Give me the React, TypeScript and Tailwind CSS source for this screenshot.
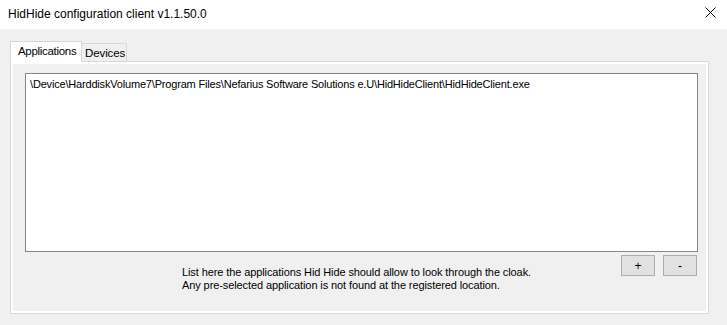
import React from 'react';

const font = "font-['Liberation_Sans',Arial,sans-serif] text-[11px] tracking-[-0.1px] text-black";

const TabStrip: React.FC = () => (
  <div className="flex items-end h-[21px]">
    <div className="relative z-10 h-[21px] w-[72px] -mb-[1px] bg-white border border-b-0 border-[#d9d9d9] pl-[7px] pt-[2px] leading-[15px] text-[11.5px] tracking-[-0.3px]">
      Applications
    </div>
    <div className="h-[18px] w-[45px] bg-[#f0f0f0] border border-l-0 border-b-0 border-[#d9d9d9] pl-[3px] pt-[2px] leading-[14px] text-[11.5px]">
      Devices
    </div>
  </div>
);

export default function App() {
  return (
    <div className={`w-[727px] h-[325px] bg-[#f0f0f0] flex flex-col overflow-hidden ${font}`}>
      {/* window title bar */}
      <div className="h-[30px] bg-white flex items-center justify-between pl-[8px] pr-[11px] border-b border-[#f4f4f4]">
        <span className="leading-[14px] -mt-[2px] text-[12px] tracking-[0px]">HidHide configuration client v1.1.50.0</span>
        <svg width="11" height="11" viewBox="0 0 11 11" className="-mt-[4px]">
          <path d="M0.5 0.5 L10.5 10.5 M10.5 0.5 L0.5 10.5" stroke="#000" strokeWidth="1" />
        </svg>
      </div>

      <div className="pl-[10px] pt-[10px]">
        <TabStrip />
        <div className="w-[699px] h-[253px] border border-[#d9d9d9] bg-white p-[2px]">
          <div className="h-full bg-[#f0f0f0] pl-[12px] pr-[8px] pt-[9px] flex flex-col">
            <div className="h-[179px] bg-white border border-[#828790] pl-[4px] pt-[3px] leading-[14px] whitespace-nowrap tracking-[-0.18px]">
              \Device\HarddiskVolume7\Program Files\Nefarius Software Solutions e.U\HidHideClient\HidHideClient.exe
            </div>
            <div className="flex justify-between">
              <div className="ml-[157px] mt-[14px] leading-[13px]">
                <div>List here the applications Hid Hide should allow to look through the cloak.</div>
                <div>Any pre-selected application is not found at the registered location.</div>
              </div>
              <div className="flex gap-[8px] mt-[3px] mr-[1px]">
                <button className="w-[34px] h-[21px] bg-[#e1e1e1] border border-[#adadad] leading-[18px] text-[12px]">+</button>
                <button className="w-[34px] h-[21px] bg-[#e1e1e1] border border-[#adadad] leading-[18px] text-[12px]">-</button>
              </div>
            </div>
          </div>
        </div>
      </div>
    </div>
  );
}
